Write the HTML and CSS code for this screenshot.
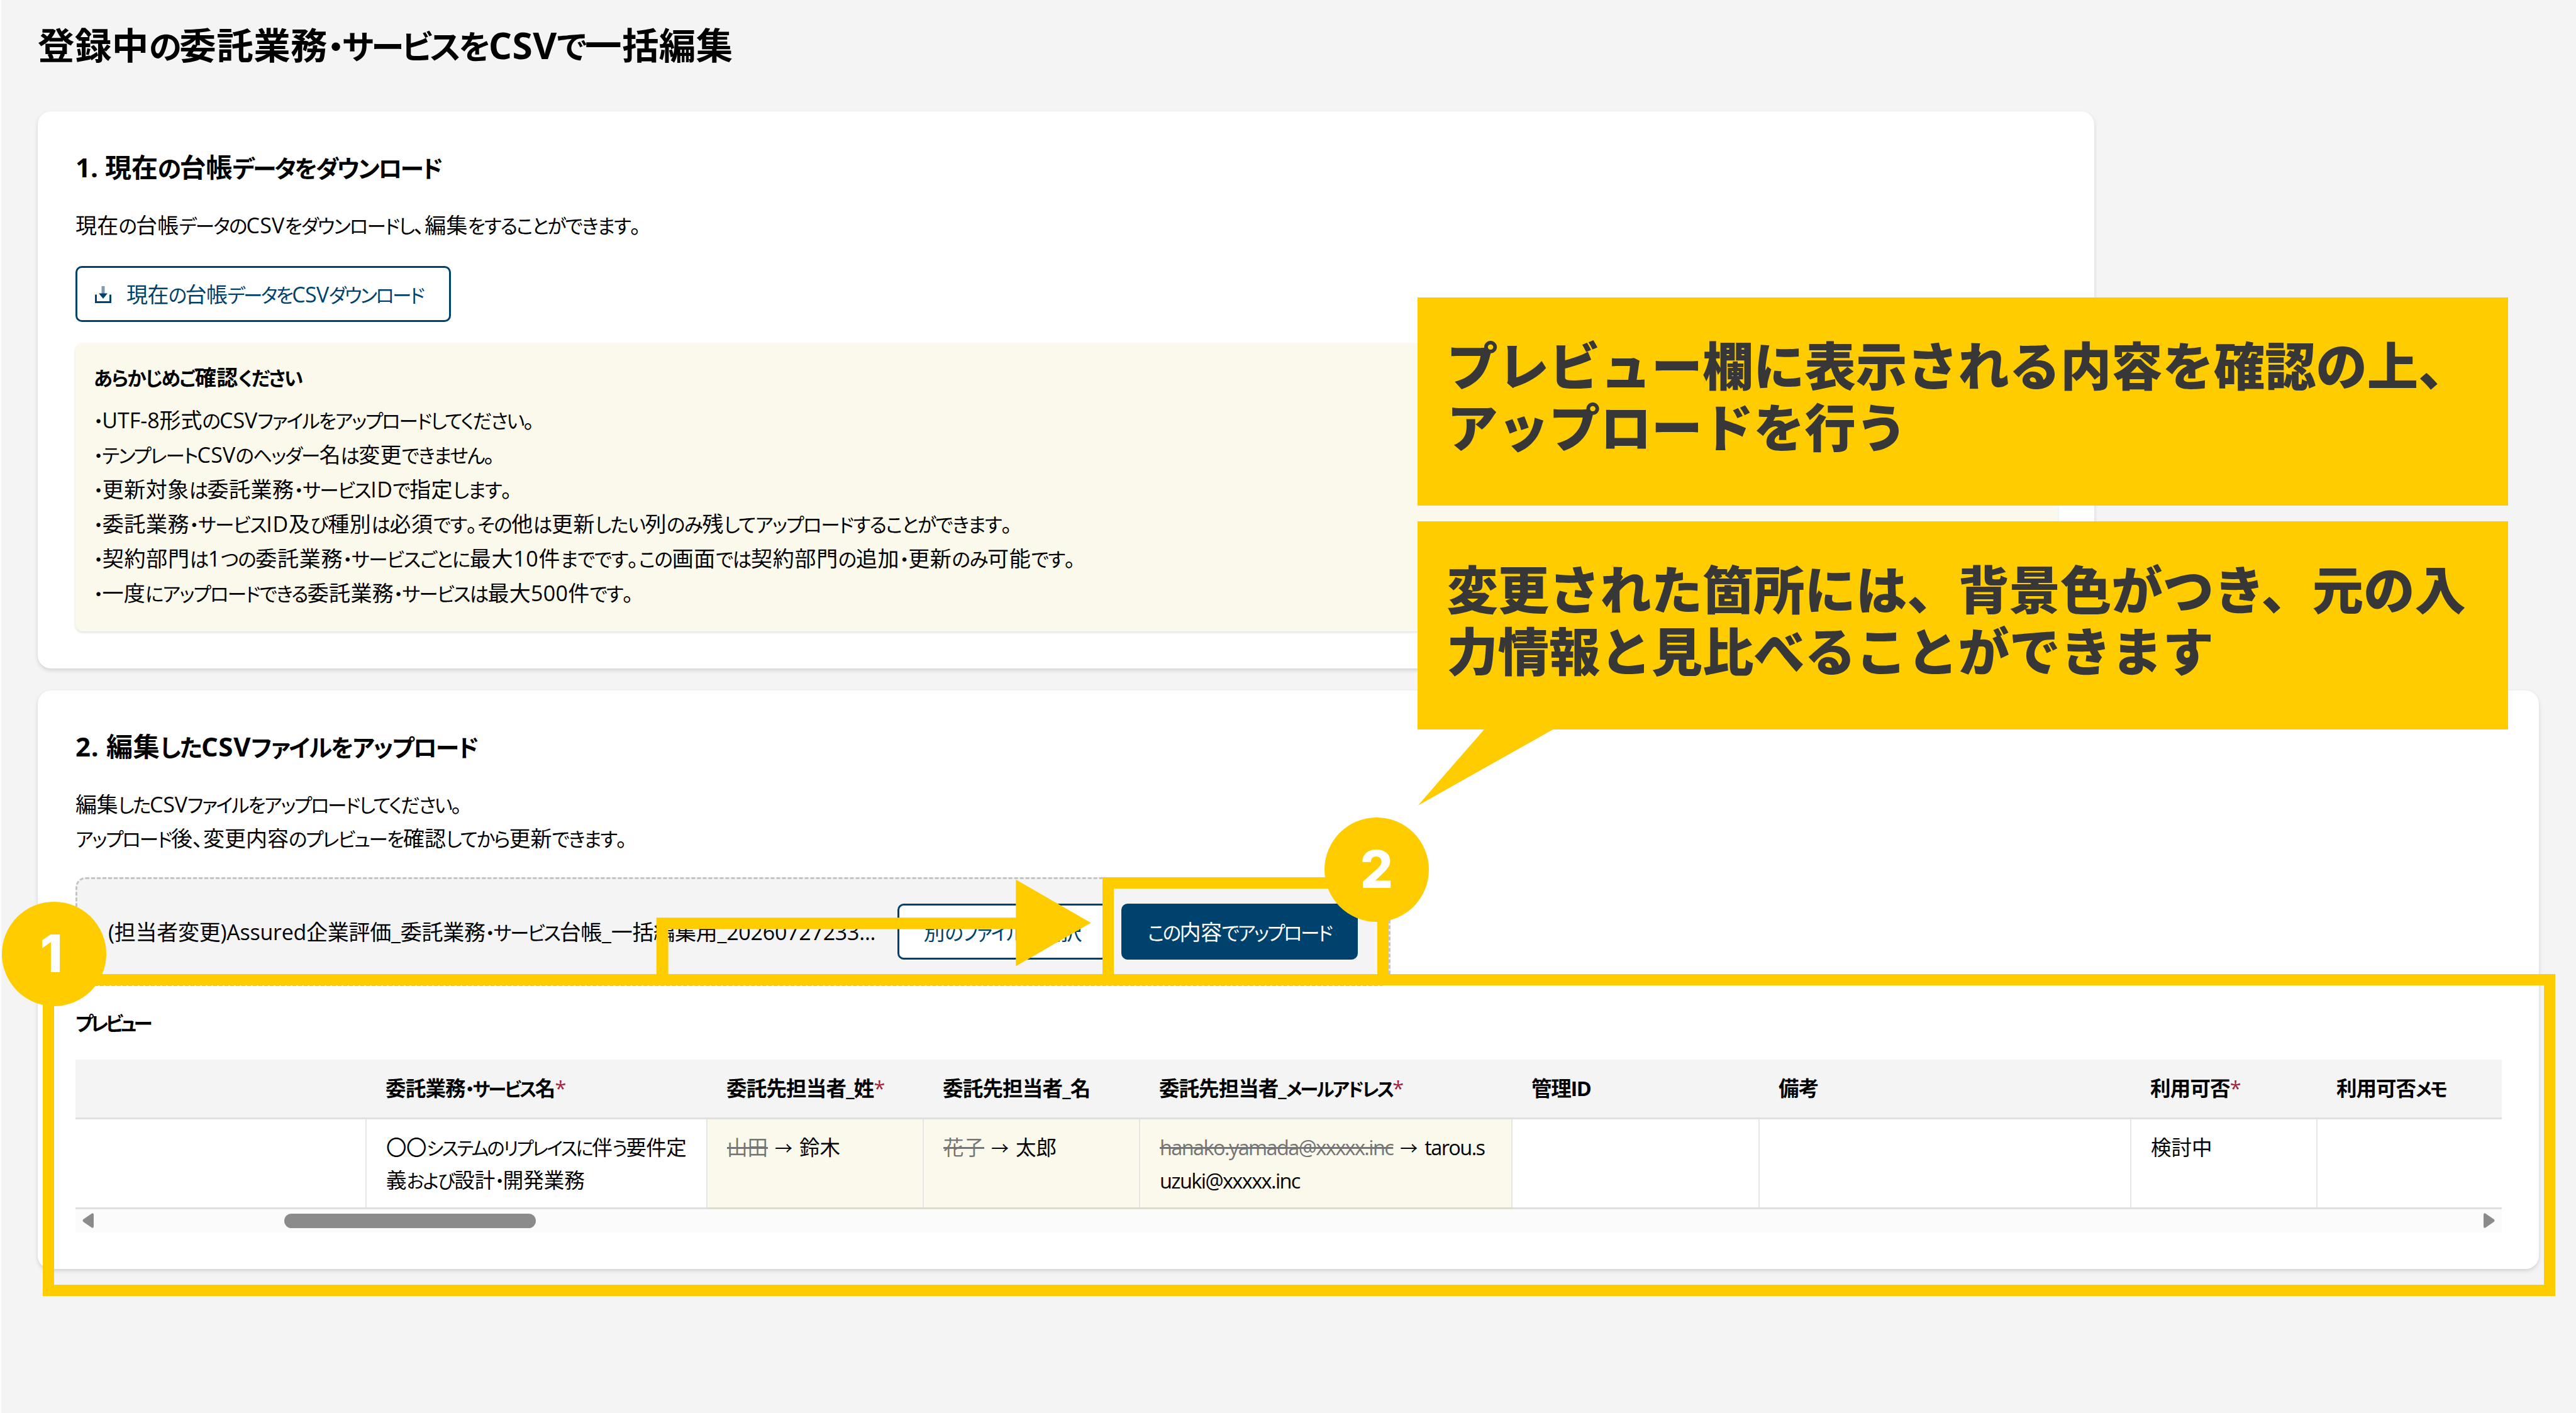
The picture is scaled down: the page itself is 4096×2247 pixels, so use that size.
FILE: index.html
```html
<!DOCTYPE html>
<html lang="ja">
<head>
    <meta charset="UTF-8">
    <meta name="viewport" content="width=device-width, initial-scale=1.0">
    <title>登録中の委託業務・サービスをCSVで一括編集</title>
    <link rel="stylesheet" href="styles.css">
</head>
<body>
<main class="page">
    <h1>登録中の委託業務・サービスをCSVで一括編集</h1>

    <section class="card card-download">
        <h2 class="title-download">1. 現在の台帳データをダウンロード</h2>
        <p class="desc desc-download">現在の台帳データのCSVをダウンロードし、編集をすることができます。</p>
        <button class="btn btn-download">
            <svg class="icon" viewBox="0 0 28 28">
                <path d="M2.500 14.500v12h23v-12" fill="none" stroke="currentColor" stroke-width="3"/>
                <path class="icon-stem" d="M11.500 1h5v12h-5z"/>
                <path d="M7 12.500h14L14 21z" fill="currentColor"/>
            </svg>
            <span>現在の台帳データをCSVダウンロード</span>
        </button>
        <div class="notice">
            <h3>あらかじめご確認ください</h3>
            <ul>
                <li>・UTF-8形式のCSVファイルをアップロードしてください。</li>
                <li>・テンプレートCSVのヘッダー名は変更できません。</li>
                <li>・更新対象は委託業務・サービスIDで指定します。</li>
                <li>・委託業務・サービスID及び種別は必須です。その他は更新したい列のみ残してアップロードすることができます。</li>
                <li>・契約部門は1つの委託業務・サービスごとに最大10件までです。この画面では契約部門の追加・更新のみ可能です。</li>
                <li>・一度にアップロードできる委託業務・サービスは最大500件です。</li>
            </ul>
        </div>
    </section>

    <section class="card card-upload">
        <h2 class="title-upload">2. 編集したCSVファイルをアップロード</h2>
        <p class="desc desc-edit">編集したCSVファイルをアップロードしてください。</p>
        <p class="desc desc-preview">アップロード後、変更内容のプレビューを確認してから更新できます。</p>
        <div class="dropzone">
            <span class="file-name">(担当者変更)Assured企業評価_委託業務・サービス台帳_一括編集用_20260727233...</span>
            <button class="btn btn-select"><span>別のファイルを選択</span></button>
            <button class="btn btn-primary"><span>この内容でアップロード</span></button>
        </div>

        <h3 class="preview-title">プレビュー</h3>
        <table>
            <colgroup>
                <col class="col-blank"><col class="col-service"><col class="col-name"><col class="col-name">
                <col class="col-mail"><col class="col-id"><col class="col-note"><col class="col-status"><col class="col-memo">
            </colgroup>
            <thead>
                <tr>
                    <th></th>
                    <th class="th-service">委託業務・サービス名<i>*</i></th>
                    <th>委託先担当者_姓<i>*</i></th>
                    <th>委託先担当者_名</th>
                    <th class="th-mail">委託先担当者_メールアドレス<i>*</i></th>
                    <th class="th-id">管理ID</th>
                    <th>備考</th>
                    <th>利用可否<i>*</i></th>
                    <th class="th-memo">利用可否メモ</th>
                </tr>
            </thead>
            <tbody>
                <tr>
                    <td></td>
                    <td><span class="service-1">〇〇システムのリプレイスに伴う要件定</span><br><span class="service-2">義および設計・開発業務</span></td>
                    <td class="changed"><del>山田</del><span class="arrow">→</span>鈴木</td>
                    <td class="changed"><del>花子</del><span class="arrow">→</span>太郎</td>
                    <td class="changed mail"><del>hanako.yamada@xxxxx.inc</del><span class="arrow">→</span>tarou.s<br>uzuki@xxxxx.inc</td>
                    <td></td>
                    <td></td>
                    <td>検討中</td>
                    <td></td>
                </tr>
            </tbody>
        </table>
        <div class="scrollbar">
            <svg class="scroll-arrow" viewBox="0 0 18 24"><path d="M18 3v18q0 4-3.500 2L1.500 14q-2-2 0-4L14.500 1q3.500-2 3.500 2z"/></svg>
            <div class="track"><div class="thumb"></div></div>
            <svg class="scroll-arrow" viewBox="0 0 18 24"><path d="M0 3v18q0 4 3.500 2l13-9q2-2 0-4L3.500 1Q0-1 0 3z"/></svg>
        </div>
    </section>
</main>

<!-- 操作ガイド -->
<div class="frame frame-preview"></div>
<div class="frame frame-upload"></div>
<svg class="guide" viewBox="0 0 4096 2247">
    <path d="M1043.700 1550V1459.300H1615.300V1398.800L1734.600 1467.600L1615.300 1536.400V1477.600H1062.600V1550z"/>
    <path d="M2361.700 1158H2473L2254.500 1281z"/>
</svg>
<div class="step step-1">1</div>
<div class="step step-2">2</div>
<div class="callout callout-1">プレビュー欄に表示される内容を確認の上、<br>アップロードを行う</div>
<div class="callout callout-2">変更された箇所には、背景色がつき、元の入<br>力情報と見比べることができます</div>

<script>
    // かなを少し詰めて表示する
    function wrapKana(root) {
        const walker = document.createTreeWalker(root, NodeFilter.SHOW_TEXT);
        const nodes = [];
        while (walker.nextNode()) {
            nodes.push(walker.currentNode);
        }
        nodes.forEach(node => {
            if (!/[ぁ-ー]/.test(node.textContent)) {
                return;
            }
            const parts = node.textContent.split(/([ぁ-ー]+)/).filter(Boolean).map(part => {
                if (!/[ぁ-ー]/.test(part)) {
                    return part;
                }
                const span = document.createElement('span');
                span.className = 'kana';
                span.textContent = part;
                return span;
            });
            node.replaceWith(...parts);
        });
    }

    wrapKana(document.querySelector('.page'));
</script>
</body>
</html>
```
FILE: styles.css
```css
* {
    box-sizing: border-box;
}

body {
    margin: 0;
    height: 2247px;
    position: relative;
    overflow: hidden;
    background: #f4f4f4;
    border-left: 2px solid #fdfdfd;
    color: #000;
    font-family: "Open Sans", "Noto Sans CJK JP", sans-serif;
    font-feature-settings: "palt";
    font-size: 34px;
    line-height: 54px;
    white-space: nowrap;
}

h1, h2, h3, p, ul {
    margin: 0;
    padding: 0;
    list-style: none;
}

h1, h2, h3, p, li, th, td, .btn, .file-name, td span {
    letter-spacing: var(--ls, 0px);
}

.kana {
    font-size: 0.9em;
    line-height: 1;
    letter-spacing: calc(var(--ls, 0px) - 0.07em);
}

.page {
    padding: 29px 0 0 58px;
}

h1 {
    --ls: 0.4px;
    margin-bottom: 64px;
    font-size: 58.5px;
    line-height: 84px;
}

h2 {
    font-size: 42px;
    line-height: 60px;
}

h3 {
    font-size: 34px;
}

/* カード */
.card {
    padding: 59px 60px 0;
    background: #fff;
    border-radius: 21px;
    box-shadow: 0 3px 6px rgba(0, 0, 0, 0.14);
}

.card-download {
    width: 3270px;
    height: 886px;
    margin-bottom: 35px;
}

.card-upload {
    width: 3977px;
    height: 920px;
}

.title-download {
    margin-bottom: 35px;
}

.title-upload {
    --ls: 0.7px;
    margin-bottom: 35px;
}

.desc-download {
    --ls: 0.2px;
    margin-bottom: 38px;
}

.desc-edit {
    --ls: -0.2px;
}

.desc-preview {
    margin-bottom: 35px;
}

/* ボタン */
.btn {
    display: flex;
    align-items: center;
    justify-content: center;
    flex: none;
    height: 89px;
    padding: 0;
    border: 3px solid #00426e;
    border-radius: 10px;
    background: #fff;
    color: #00426e;
    font-family: inherit;
    font-size: 34px;
    line-height: 54px;
    font-feature-settings: "palt";
}

.btn-download {
    --ls: -0.6px;
    width: 597px;
    justify-content: flex-start;
    gap: 23px;
    padding-left: 27px;
}

.icon {
    width: 28px;
    height: 28px;
}

.icon-stem {
    fill: #7f9cb5;
}

.btn-select {
    --ls: -0.1px;
    width: 335px;
}

.btn-primary {
    --ls: -0.5px;
    width: 376px;
    margin-left: 21px;
    background: #00426e;
    color: #fff;
}

/* 注意事項 */
.notice {
    width: 3152px;
    height: 458px;
    margin-top: 34px;
    padding: 27px 29px;
    background: #fbf9ec;
    border-radius: 12px;
    box-shadow: 0 2px 4px rgba(0, 0, 0, 0.12);
}

.notice h3 {
    --ls: 0.3px;
    margin-bottom: 14px;
}

.notice li {
    line-height: 55px;
}

.notice li:nth-child(1) { --ls: 0px; }
.notice li:nth-child(2) { --ls: 0.2px; }
.notice li:nth-child(3) { --ls: 0.5px; }
.notice li:nth-child(4) { --ls: 0.6px; }
.notice li:nth-child(5) { --ls: 0.7px; }
.notice li:nth-child(6) { --ls: 0.3px; }

/* ファイル選択 */
.dropzone {
    display: flex;
    align-items: center;
    width: 2091px;
    height: 173px;
    padding-left: 49px;
    border: 3px dashed #c4c4c4;
    border-radius: 16px;
    background: #f4f4f4;
}

.file-name {
    --ls: -0.25px;
    width: 1255px;
}

.preview-title {
    --ls: -2.3px;
    margin: 31px 0 32px;
}

/* プレビュー表 */
table {
    width: 3858px;
    table-layout: fixed;
    border-collapse: collapse;
    font-size: 32.5px;
    line-height: 52px;
}

.col-blank { width: 462px; }
.col-service { width: 542px; }
.col-name { width: 344px; }
.col-mail { width: 592px; }
.col-id { width: 393px; }
.col-note { width: 591px; }
.col-status { width: 296px; }

th, td {
    padding: 0 0 0 31px;
    text-align: left;
    vertical-align: top;
    border-bottom: 3px solid #dfdfdf;
}

th {
    --ls: -0.8px;
    height: 93px;
    padding-top: 20px;
    background: #f4f4f4;
}

th i {
    color: #a4243b;
    font-style: normal;
    font-weight: 400;
}

.th-service { --ls: -0.8px; }
.th-mail { --ls: -0.95px; }
.th-id { --ls: -1.3px; }
.th-memo { --ls: -1px; }

td {
    height: 143px;
    padding-top: 19px;
}

td + td {
    border-left: 2px solid #e6e6e6;
}

.changed {
    background: #fbf9ec;
    border-bottom-color: #dddbce;
}

.service-1 { --ls: -0.45px; }
.mail { --ls: -1.6px; }

del {
    color: #757575;
}

td .arrow {
    display: inline-block;
    width: 50px;
    text-align: center;
    font-size: 28px;
    letter-spacing: 0;
}

/* 横スクロールバー */
.scrollbar {
    display: flex;
    align-items: center;
    justify-content: space-between;
    width: 3858px;
    height: 37px;
    padding: 0 11px;
    background: #fbfbfb;
}

.scroll-arrow {
    width: 18px;
    height: 24px;
    fill: #8b8b8b;
}

.track {
    flex: 1;
    padding-left: 303px;
}

.thumb {
    width: 400px;
    height: 23px;
    border-radius: 12px;
    background: #8b8b8b;
}

/* 操作ガイド */
.guide {
    position: absolute;
    top: 0;
    left: -2px;
    width: 4096px;
    height: 2247px;
    fill: #fc0;
}

.frame {
    position: absolute;
    border: 18.500px solid #fc0;
}

.frame-preview {
    left: 66px;
    top: 1549px;
    width: 3995px;
    height: 512px;
}

.frame-upload {
    left: 1751px;
    top: 1394.500px;
    width: 454.500px;
    height: 172px;
}

.step {
    position: absolute;
    width: 166px;
    height: 166px;
    border-radius: 50%;
    background: #fc0;
    color: #fff;
    font-family: Inter, sans-serif;
    font-size: 82px;
    font-weight: 800;
    line-height: 166px;
    text-align: center;
}

.step-1 {
    left: 1px;
    top: 1434px;
    text-indent: -9px;
}

.step-2 {
    left: 2104px;
    top: 1300px;
}

.callout {
    position: absolute;
    left: 2251.500px;
    width: 1734.500px;
    height: 331px;
    padding: 56px 47px;
    background: #fc0;
    color: #373737;
    font-family: "Noto Sans CJK JP", sans-serif;
    font-feature-settings: normal;
    font-size: 81.300px;
    font-weight: 900;
    line-height: 98px;
}

.callout-1 {
    top: 472.500px;
}

.callout-2 {
    top: 829px;
}
```
